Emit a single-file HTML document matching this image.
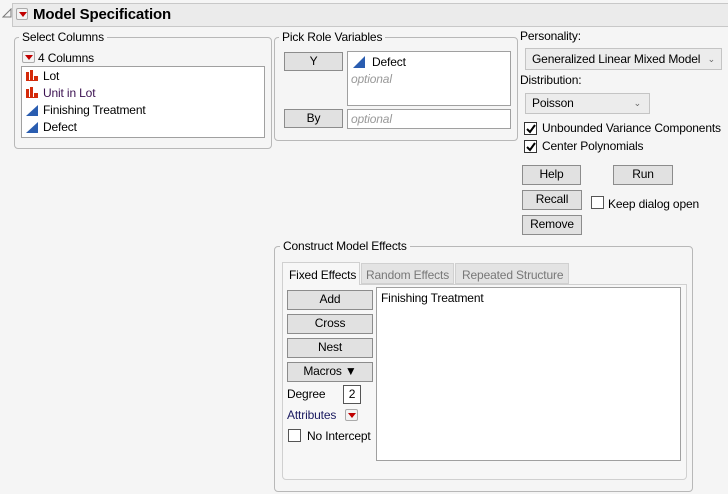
<!DOCTYPE html>
<html><head><style>
*{box-sizing:border-box;margin:0;padding:0}
body{width:728px;height:494px;background:#f5f5f5;font-family:"Liberation Sans",sans-serif;font-size:12px;color:#000;position:relative;overflow:hidden;letter-spacing:-0.15px}
.a{position:absolute;white-space:nowrap}
.grp{position:absolute;border:1px solid #b8b8b8;border-radius:4px}
.lbl{position:absolute;background:#f5f5f5;padding:0 3px;font-size:12px;line-height:14px}
.box{position:absolute;background:#fff;border:1px solid #a0a0a0}
.btn{position:absolute;background:#e1e1e1;border:1px solid #8c8c8c;text-align:center;font-size:12px;line-height:17px}
.rb{position:absolute;width:13px;height:12px;border:1px solid #aaa;background:#f3f3f3;border-radius:2px}
.rb:after{content:"";position:absolute;left:2px;top:3px;border-left:4px solid transparent;border-right:4px solid transparent;border-top:5px solid #c00000}
.cb{position:absolute;width:13px;height:13px;border:1px solid #333;background:#fff}
.dd{position:absolute;background:#ececec;border:1px solid #c4c4c4;font-size:12px;line-height:19px;padding-left:6px}
.t{font-size:12px;line-height:14px}
</style></head><body>
<svg class="a" style="left:2px;top:8px" width="10" height="10"><path d="M1 9 L9 1 L9 9 Z" fill="none" stroke="#777"/></svg>
<div class="a" style="left:12px;top:3px;width:716px;height:24px;background:#ebebeb;border:1px solid #c8c8c8;border-right:none"></div>
<div class="rb" style="left:16px;top:8px;width:12px"></div>
<div class="a" style="left:33px;top:5px;font-size:15px;font-weight:bold;line-height:20px">Model Specification</div>

<div class="grp" style="left:14px;top:37px;width:258px;height:112px"></div>
<div class="lbl" style="left:19px;top:30px">Select Columns</div>
<div class="rb" style="left:22px;top:51px"></div>
<div class="a t" style="left:38px;top:51px;color:#000">4 Columns</div>
<div class="box" style="left:21px;top:66px;width:244px;height:72px"></div>
<svg class="a" style="left:25px;top:69px" width="14" height="68">
<g fill="#d42a0a"><rect x="1" y="3" width="3" height="9"/><rect x="5" y="1" width="3" height="11"/><rect x="9" y="7" width="4" height="5"/><rect x="1" y="11" width="12" height="1"/></g>
<g fill="#d42a0a" transform="translate(0,17)"><rect x="1" y="3" width="3" height="9"/><rect x="5" y="1" width="3" height="11"/><rect x="9" y="7" width="4" height="5"/><rect x="1" y="11" width="12" height="1"/></g>
<path d="M1 47 L13 36 L13 47 Z" fill="#2a5db0"/><path d="M1 64 L13 53 L13 64 Z" fill="#2a5db0"/></svg>
<div class="a t" style="left:43px;top:69px">Lot</div>
<div class="a t" style="left:43px;top:86px;color:#3a1050">Unit in Lot</div>
<div class="a t" style="left:43px;top:103px">Finishing Treatment</div>
<div class="a t" style="left:43px;top:120px">Defect</div>

<div class="grp" style="left:274px;top:37px;width:244px;height:104px"></div>
<div class="lbl" style="left:279px;top:30px">Pick Role Variables</div>
<div class="btn" style="left:284px;top:52px;width:59px;height:19px">Y</div>
<div class="box" style="left:347px;top:51px;width:164px;height:55px"></div>
<svg class="a" style="left:352px;top:55px" width="14" height="14"><path d="M1 13 L13 1 L13 13 Z" fill="#2a5db0"/></svg>
<div class="a t" style="left:372px;top:55px">Defect</div>
<div class="a t" style="left:351px;top:72px;color:#999;font-style:italic">optional</div>
<div class="btn" style="left:284px;top:109px;width:59px;height:19px">By</div>
<div class="box" style="left:347px;top:109px;width:164px;height:20px"></div>
<div class="a t" style="left:351px;top:112px;color:#999;font-style:italic">optional</div>

<div class="a t" style="left:520px;top:29px">Personality:</div>
<div class="dd" style="left:525px;top:48px;width:197px;height:22px;line-height:20px">Generalized Linear Mixed Model <span style="position:absolute;right:6px;font-size:9px;color:#666">&#8964;</span></div>
<div class="a t" style="left:520px;top:73px">Distribution:</div>
<div class="dd" style="left:525px;top:93px;width:125px;height:21px">Poisson<span style="position:absolute;right:8px;font-size:9px;color:#666">&#8964;</span></div>
<div class="cb" style="left:524px;top:122px"></div><svg class="a" style="left:525px;top:123px" width="12" height="12"><path d="M2 6 L5 9 L10 2" fill="none" stroke="#000" stroke-width="2"/></svg>
<div class="a t" style="left:542px;top:121px">Unbounded Variance Components</div>
<div class="cb" style="left:524px;top:140px"></div><svg class="a" style="left:525px;top:141px" width="12" height="12"><path d="M2 6 L5 9 L10 2" fill="none" stroke="#000" stroke-width="2"/></svg>
<div class="a t" style="left:542px;top:139px">Center Polynomials</div>
<div class="btn" style="left:522px;top:165px;width:59px;height:20px">Help</div>
<div class="btn" style="left:613px;top:165px;width:60px;height:20px">Run</div>
<div class="btn" style="left:522px;top:190px;width:60px;height:20px">Recall</div>
<div class="cb" style="left:591px;top:196px;border-color:#555"></div>
<div class="a t" style="left:608px;top:197px">Keep dialog open</div>
<div class="btn" style="left:522px;top:215px;width:60px;height:20px">Remove</div>

<div class="grp" style="left:274px;top:246px;width:419px;height:246px"></div>
<div class="lbl" style="left:280px;top:239px">Construct Model Effects</div>
<div class="a" style="left:282px;top:284px;width:405px;height:196px;background:#f7f7f7;border:1px solid #d0d0d0;border-radius:0 0 4px 4px"></div>
<div class="a t" style="left:282px;top:262px;width:78px;height:23px;background:#f7f7f7;border:1px solid #d0d0d0;border-bottom:none;padding:5px 0 0 6px">Fixed Effects</div>
<div class="a t" style="left:361px;top:263px;width:93px;height:21px;background:#e3e3e3;border:1px solid #d0d0d0;padding:4px 0 0 4px;color:#777">Random Effects</div>
<div class="a t" style="left:455px;top:263px;width:114px;height:21px;background:#e3e3e3;border:1px solid #d0d0d0;padding:4px 0 0 6px;color:#777">Repeated Structure</div>
<div class="btn" style="left:287px;top:290px;width:86px;height:20px">Add</div>
<div class="btn" style="left:287px;top:314px;width:86px;height:20px">Cross</div>
<div class="btn" style="left:287px;top:338px;width:86px;height:20px">Nest</div>
<div class="btn" style="left:287px;top:362px;width:86px;height:20px">Macros &#9660;</div>
<div class="a t" style="left:287px;top:387px">Degree</div>
<div class="box" style="left:343px;top:385px;width:18px;height:19px;border-color:#555;text-align:center;line-height:16px">2</div>
<div class="a t" style="left:287px;top:408px;color:#1a1a60">Attributes</div>
<div class="rb" style="left:345px;top:409px"></div>
<div class="cb" style="left:288px;top:429px;border-color:#555"></div>
<div class="a t" style="left:307px;top:429px">No Intercept</div>
<div class="box" style="left:376px;top:287px;width:305px;height:174px"></div>
<div class="a t" style="left:381px;top:291px">Finishing Treatment</div>
</body></html>
